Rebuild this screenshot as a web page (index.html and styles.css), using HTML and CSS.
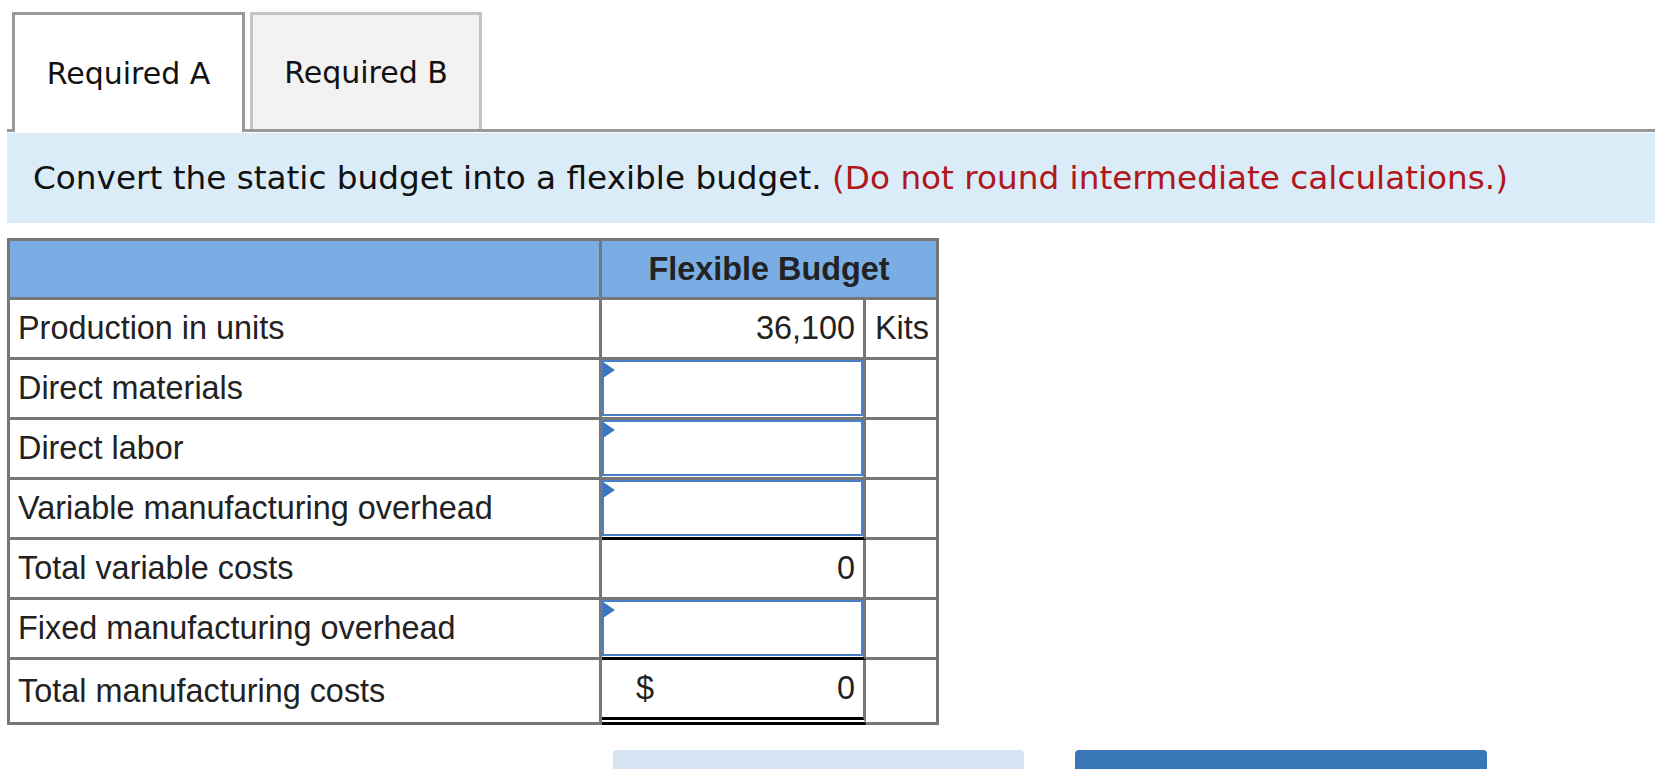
FILE: index.html
```html
<!DOCTYPE html>
<html lang="en">
<head>
<meta charset="utf-8">
<title>Flexible Budget</title>
<link rel="stylesheet" href="styles.css">
</head>
<body>
<div class="page">
  <div class="tabs">
    <div class="tab active">Required A</div>
    <div class="tab inactive">Required B</div>
  </div>
  <div class="instructions">Convert the static budget into a flexible budget.&nbsp;<span class="note">(Do not round intermediate calculations.)</span></div>
  <table class="budget">
    <colgroup><col class="c1"><col class="c2"><col class="c3"></colgroup>
    <thead>
      <tr><th></th><th colspan="2">Flexible Budget</th></tr>
    </thead>
    <tbody>
      <tr><td class="label">Production in units</td><td class="num">36,100</td><td class="unit">Kits</td></tr>
      <tr><td class="label">Direct materials</td><td class="entry"><div class="field"><input type="text" aria-label="Direct materials"></div></td><td></td></tr>
      <tr><td class="label">Direct labor</td><td class="entry"><div class="field"><input type="text" aria-label="Direct labor"></div></td><td></td></tr>
      <tr><td class="label">Variable manufacturing overhead</td><td class="entry sum-above"><div class="field"><input type="text" aria-label="Variable manufacturing overhead"></div></td><td></td></tr>
      <tr><td class="label">Total variable costs</td><td class="num">0</td><td></td></tr>
      <tr><td class="label">Fixed manufacturing overhead</td><td class="entry sum-above"><div class="field"><input type="text" aria-label="Fixed manufacturing overhead"></div></td><td></td></tr>
      <tr class="grand"><td class="label">Total manufacturing costs</td><td class="num total"><div class="money"><span>$</span><span>0</span></div></td><td></td></tr>
    </tbody>
  </table>
  <div class="nav">
    <button class="btn prev" aria-label="Previous"></button>
    <button class="btn next" aria-label="Next"></button>
  </div>
</div>
</body>
</html>
```
FILE: styles.css
```css
html, body {
  margin: 0;
  background: #fff;
}

.page {
  padding: 12px 0 0 7px;
}

.tabs {
  display: flex;
  align-items: flex-end;
  gap: 5px;
  padding-left: 5px;
  height: 117px;
  border-bottom: 3px solid #999;
}

.tab {
  box-sizing: border-box;
  display: flex;
  align-items: center;
  justify-content: center;
  font-family: "DejaVu Sans", Verdana, sans-serif;
  font-size: 30px;
  color: #111;
  border: 3px solid;
  border-bottom: 0;
}

.tab.active {
  width: 233px;
  height: 120px;
  margin-bottom: -3px;
  background: #fff;
  border-color: #999;
  position: relative;
}

.tab.inactive {
  width: 232px;
  height: 117px;
  background: #f2f2f2;
  border-color: #c4c4c4;
}

.instructions {
  height: 90px;
  margin-top: 1px;
  display: flex;
  align-items: center;
  padding-left: 26px;
  background: #dbecf9;
  font-family: "DejaVu Sans", Verdana, sans-serif;
  font-size: 32.7px;
  color: #111;
  white-space: nowrap;
}

.note {
  color: #b0171c;
}

.budget {
  margin-top: 15px;
  border-collapse: separate;
  border-spacing: 0;
  table-layout: fixed;
  width: 932px;
  border-top: 3px solid #777;
  border-left: 3px solid #777;
  font-family: "Liberation Sans", Arial, sans-serif;
  font-size: 32.4px;
  color: #222;
}

.c1 { width: 592px; }
.c2 { width: 264px; }
.c3 { width: 73px; }

.budget th,
.budget td {
  box-sizing: border-box;
  height: 60px;
  padding: 0 8px;
  border-right: 3px solid #777;
  border-bottom: 3px solid #777;
  vertical-align: middle;
  white-space: nowrap;
}

.budget thead th {
  height: 59px;
  background: #79ade3;
  font-weight: bold;
  text-align: center;
  color: #222;
}

.budget td.num {
  text-align: right;
}

.budget td.unit {
  padding-left: 9px;
}

.budget td.entry {
  padding: 0;
  vertical-align: top;
}

.budget td.sum-above {
  border-bottom-color: #000;
}

.field {
  position: relative;
  height: 56px;
}

.field::before {
  content: "";
  position: absolute;
  left: 1px;
  top: 2px;
  border-left: 12px solid #3a75bf;
  border-top: 8px solid transparent;
  border-bottom: 8px solid transparent;
}

.field input {
  display: block;
  box-sizing: border-box;
  width: 100%;
  height: 56px;
  margin: 0;
  padding: 0 8px;
  border: 2px solid #4a80c6;
  background: #fff;
  font-family: "Liberation Sans", Arial, sans-serif;
  font-size: 32px;
  color: #222;
  text-align: right;
  outline: none;
}

.grand td {
  height: 65px;
}

.budget td.total {
  padding: 0 8px 0 34px;
  border-bottom: 8px double #000;
}

.money {
  display: flex;
  justify-content: space-between;
}

.nav {
  display: flex;
  gap: 51px;
  padding-left: 606px;
  margin-top: 25px;
}

.btn {
  height: 60px;
  border: 0;
  border-radius: 4px;
  padding: 0;
}

.btn.prev {
  width: 411px;
  background: #d6e3f2;
}

.btn.next {
  width: 412px;
  background: #3a77b8;
}
```
